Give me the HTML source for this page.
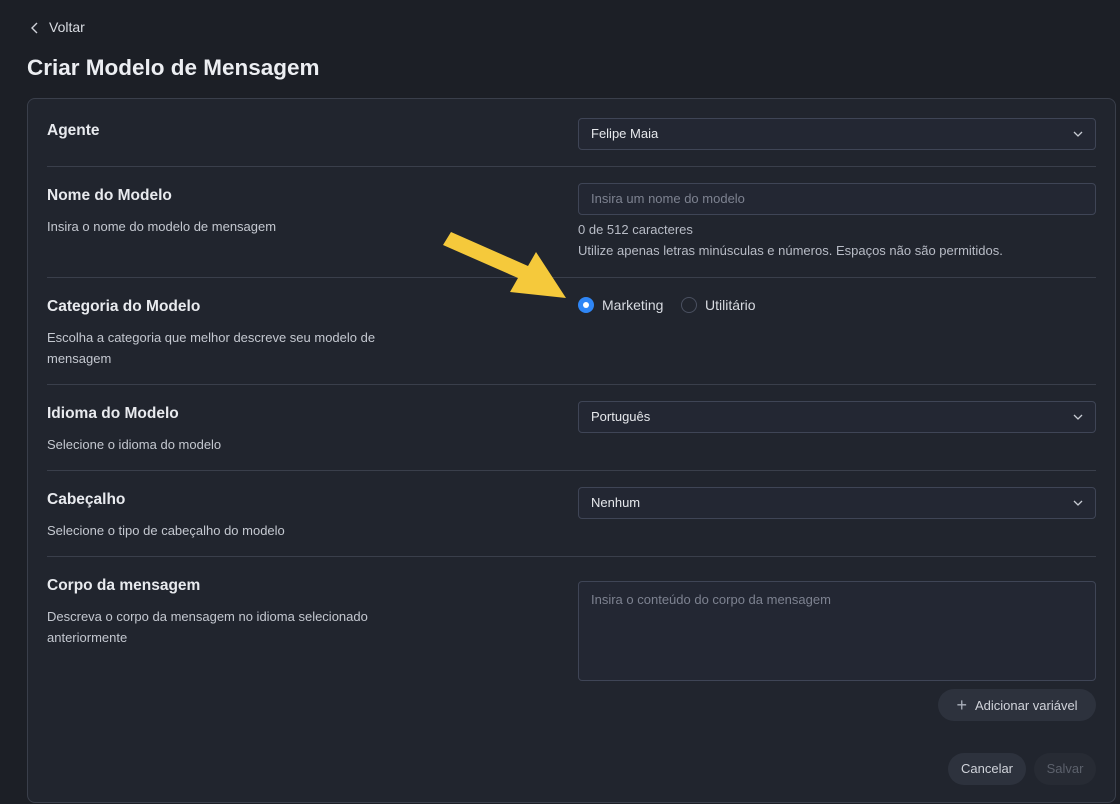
<!DOCTYPE html>
<html><head><meta charset="utf-8"><style>
*{box-sizing:border-box;margin:0;padding:0}
body{width:1120px;height:804px;background:#1c1f26;font-family:"Liberation Sans",sans-serif;color:#e6e8ec;position:relative;overflow:hidden}
.a{position:absolute}
.card{left:27px;top:98px;width:1089px;height:705px;background:#21252e;border:1px solid #3a3f4b;border-radius:8px}
.h{font-size:15.5px;color:#e8eaee;font-weight:bold}
.d{font-size:13px;color:#c4c8d0;line-height:21px}
.line{left:47px;width:1049px;height:1px;background:#3a3f4b}
.inp{left:578px;width:518px;height:32px;border:1px solid #3f4556;border-radius:4px;background:#232733;font-size:13px;padding:0 12px;line-height:30px}
.ph{color:#7d8290}
.chev{position:absolute;right:12px;top:11px}
.small{font-size:13px;color:#b8bcc6}
.btn{border-radius:16px;background:#2d323d;font-size:13px;height:32px;line-height:32px;text-align:center}
</style></head><body>
<svg class="a" style="left:30px;top:21px" width="10" height="14" viewBox="0 0 10 14"><path d="M7 2 L2 7 L7 12" stroke="#d0d3da" stroke-width="1.4" fill="none"/></svg>
<div class="a" style="left:49px;top:19px;font-size:14px;color:#d8dbe1">Voltar</div>
<div class="a" style="left:27px;top:55px;font-size:22.5px;font-weight:bold;color:#eceef2">Criar Modelo de Mensagem</div>
<div class="a card"></div>

<div class="a h" style="left:47px;top:122px">Agente</div>
<div class="a inp" style="top:118px">Felipe Maia<svg class="chev" width="10" height="8" viewBox="0 0 10 8"><path d="M1 2 L5 6 L9 2" stroke="#c8ccd4" stroke-width="1.3" fill="none"/></svg></div>
<div class="a line" style="top:166px"></div>

<div class="a h" style="left:47px;top:187px">Nome do Modelo</div>
<div class="a d" style="left:47px;top:216px">Insira o nome do modelo de mensagem</div>
<div class="a inp ph" style="top:183px">Insira um nome do modelo</div>
<div class="a small" style="left:578px;top:222px">0 de 512 caracteres</div>
<div class="a small" style="left:578px;top:243px">Utilize apenas letras minúsculas e números. Espaços não são permitidos.</div>
<div class="a line" style="top:277px"></div>

<div class="a h" style="left:47px;top:298px">Categoria do Modelo</div>
<div class="a d" style="left:47px;top:327px;width:360px">Escolha a categoria que melhor descreve seu modelo de mensagem</div>
<div class="a" style="left:578px;top:297px;width:16px;height:16px;border-radius:50%;background:#2f86f6"></div>
<div class="a" style="left:583px;top:302px;width:6px;height:6px;border-radius:50%;background:#fff"></div>
<div class="a" style="left:602px;top:297px;font-size:14px;color:#d8dbe1">Marketing</div>
<div class="a" style="left:681px;top:297px;width:16px;height:16px;border-radius:50%;border:1px solid #4a5060"></div>
<div class="a" style="left:705px;top:297px;font-size:14px;color:#d8dbe1">Utilitário</div>
<svg class="a" style="left:440px;top:232px" width="130" height="70" viewBox="0 0 130 70"><path d="M3 13 L78 46 L70 60 L126 66 L96 20 L88 34 L11 0 Z" fill="#f5c93b"/></svg>
<div class="a line" style="top:384px"></div>

<div class="a h" style="left:47px;top:405px">Idioma do Modelo</div>
<div class="a d" style="left:47px;top:434px">Selecione o idioma do modelo</div>
<div class="a inp" style="top:401px">Português<svg class="chev" width="10" height="8" viewBox="0 0 10 8"><path d="M1 2 L5 6 L9 2" stroke="#c8ccd4" stroke-width="1.3" fill="none"/></svg></div>
<div class="a line" style="top:470px"></div>

<div class="a h" style="left:47px;top:491px">Cabeçalho</div>
<div class="a d" style="left:47px;top:520px">Selecione o tipo de cabeçalho do modelo</div>
<div class="a inp" style="top:487px">Nenhum<svg class="chev" width="10" height="8" viewBox="0 0 10 8"><path d="M1 2 L5 6 L9 2" stroke="#c8ccd4" stroke-width="1.3" fill="none"/></svg></div>
<div class="a line" style="top:556px"></div>

<div class="a h" style="left:47px;top:577px">Corpo da mensagem</div>
<div class="a d" style="left:47px;top:606px;width:360px">Descreva o corpo da mensagem no idioma selecionado anteriormente</div>
<div class="a inp ph" style="top:581px;height:100px;line-height:36px">Insira o conteúdo do corpo da mensagem</div>
<div class="a btn" style="left:938px;top:689px;width:158px;color:#d0d3da"><span style="font-size:18px;color:#aab0bb;margin-right:8px;vertical-align:-1px">+</span>Adicionar variável</div>
<div class="a btn" style="left:948px;top:753px;width:78px;color:#d0d3da">Cancelar</div>
<div class="a btn" style="left:1034px;top:753px;width:62px;color:#5c616c;background:#272b34">Salvar</div>
</body></html>
